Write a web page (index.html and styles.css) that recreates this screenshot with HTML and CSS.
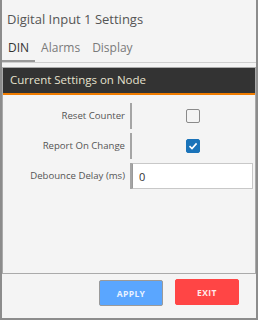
FILE: index.html
```html
<!DOCTYPE html>
<html lang="en">
<head>
  <meta charset="UTF-8">
  <meta name="viewport" content="width=device-width, initial-scale=1.0">
  <title>Digital Input 1 Settings</title>
  <link rel="stylesheet" href="styles.css">
</head>
<body>
  <div class="window">
    <div class="title">Digital Input 1 Settings</div>
    <div class="tabs">
      <div class="tab active">DIN</div>
      <div class="tab">Alarms</div>
      <div class="tab">Display</div>
    </div>

    <div class="panel">
      <div class="panel-header">Current Settings on Node</div>
      <div class="panel-body">
        <div class="row">
          <div class="label">Reset Counter</div>
          <div class="value">
            <span class="checkbox"></span>
          </div>
        </div>
        <div class="row">
          <div class="label">Report On Change</div>
          <div class="value">
            <span class="checkbox checked">
              <svg width="10" height="10" viewBox="0 0 10 10">
                <polyline points="1.5,5.2 4,7.6 8.6,2.4" fill="none" stroke="#fff" stroke-width="1.6"/>
              </svg>
            </span>
          </div>
        </div>
        <div class="row">
          <div class="label">Debounce Delay (ms)</div>
          <div class="value">
            <input class="text-input" type="text" value="0">
          </div>
        </div>
      </div>
    </div>

    <div class="footer">
      <button class="btn apply-btn">APPLY</button>
      <button class="btn exit-btn">EXIT</button>
    </div>
  </div>
</body>
</html>
```

FILE: styles.css
```css
body {
  margin: 0;
  font-family: "Open Sans", "Noto Sans", sans-serif;
  background-color: #f4f4f4;
}

.window {
  width: 258px;
  height: 320px;
  box-sizing: border-box;
  border-left: 2px solid #8c8c8c;
  border-right: 2px solid #8c8c8c;
  border-bottom: 2px solid #8c8c8c;
  background-color: #f4f4f4;
  display: flex;
  flex-direction: column;
}

.title {
  padding: 10px 0 0 5px;
  font-size: 13px;
  line-height: 18px;
  color: #555;
}

.tabs {
  margin-top: 6px;
  display: flex;
  border-bottom: 1px solid #cfcfcf;
}

.tab {
  padding: 6px 6px 4px;
  font-size: 12px;
  line-height: 16px;
  color: #7a7a7a;
  border-bottom: 2px solid transparent;
}

.tab.active {
  color: #333;
  border-bottom-color: #9a9a9a;
}

.panel {
  margin-top: 4px;
  flex: 1;
  border: 1px solid #aaa;
  display: flex;
  flex-direction: column;
}

.panel-header {
  background-color: #333;
  color: #e6e2cf;
  font-size: 11.5px;
  line-height: 23px;
  padding: 0 0 2px 7px;
  border-bottom: 2px solid #f07c00;
}

.panel-body {
  padding-top: 8px;
  display: flex;
  flex-direction: column;
  gap: 4px;
}

.row {
  display: grid;
  grid-template-columns: 127px 123px;
  height: 26px;
}

.label {
  text-align: right;
  padding-right: 5px;
  font-size: 9.6px;
  line-height: 26px;
  color: #555;
}

.value {
  border-left: 2px solid #a5a5a5;
  display: flex;
  align-items: center;
  justify-content: center;
}

.checkbox {
  width: 14px;
  height: 14px;
  box-sizing: border-box;
  border: 1.5px solid #8a8a8a;
  border-radius: 2px;
  display: flex;
  align-items: center;
  justify-content: center;
}

.checkbox.checked {
  background-color: #1a73b9;
  border-color: #1a73b9;
}

.text-input {
  width: 100%;
  height: 26px;
  box-sizing: border-box;
  margin: 0;
  border: 1px solid #c8c8c8;
  border-left-color: #999;
  background-color: #fff;
  padding: 0 0 0 6px;
  font-family: "Open Sans", sans-serif;
  font-size: 11px;
  color: #333;
  outline: none;
}

.footer {
  height: 44px;
  flex-shrink: 0;
  display: flex;
  justify-content: flex-end;
  align-items: flex-start;
  gap: 12px;
  padding: 5px 17px 0 0;
  box-sizing: border-box;
}

.btn {
  width: 64px;
  height: 26px;
  border-radius: 2px;
  font-family: "Open Sans", sans-serif;
  font-weight: 700;
  font-size: 8.5px;
  letter-spacing: 0.4px;
  padding: 0;
  cursor: pointer;
}

.apply-btn {
  margin-top: 1px;
  background-color: #5aa6ff;
  border: 1px solid #9a9a9a;
  color: #eaf2ff;
}

.exit-btn {
  background-color: #ff4545;
  border: 1px solid #ff4545;
  color: #ffeaea;
}
```
